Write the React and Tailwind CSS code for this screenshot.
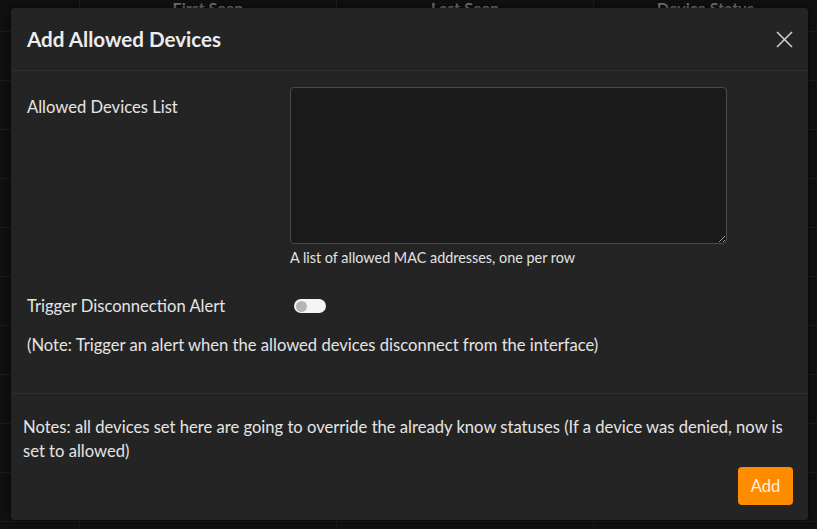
import React from "react";

function Toggle() {
  return (
    <div className="ml-[4px] flex h-[14px] w-[32px] items-center rounded-full bg-[#f5f5f5] px-[2px]">
      <div className="h-[11px] w-[11px] rounded-full bg-[#b5b5b5]" />
    </div>
  );
}

export default function App() {
  const rows = Array.from({ length: 11 });
  return (
    <div className="relative h-[529px] w-[817px] overflow-hidden bg-[#101010] font-['Lato',sans-serif] text-[#e4e4e4]">
      {/* background table */}
      <div className="absolute inset-0">
        <div className="grid h-[32px] grid-cols-[80px_257px_257px_223px] border-b border-[#1d1d1d]">
          <div className="border-r border-[#1d1d1d]" />
          <div className="flex justify-center border-r border-[#1d1d1d] text-[16px] font-bold leading-[16px] text-[#6f6f6f]">First Seen</div>
          <div className="flex justify-center border-r border-[#1d1d1d] text-[16px] font-bold leading-[16px] text-[#6f6f6f]">Last Seen</div>
          <div className="flex justify-center text-[16px] font-bold leading-[16px] text-[#6f6f6f]">Device Status</div>
        </div>
        {rows.map((_, i) => (
          <div key={i} className="grid h-[49px] grid-cols-[80px_257px_257px_223px] border-b border-[#1d1d1d]">
            <div className="border-r border-[#1a1a1a]" />
            <div className="border-r border-[#1a1a1a]" />
            <div className="border-r border-[#1a1a1a]" />
            <div />
          </div>
        ))}
      </div>

      {/* modal */}
      <div className="absolute left-[11px] top-[8px] flex h-[512px] w-[797px] flex-col rounded-[4px] bg-[#242424] shadow-[0_0_6px_rgba(0,0,0,0.6)]">
        <div className="flex h-[63px] items-center justify-between border-b border-[#2f2f2f] pl-[16px] pr-[15px]">
          <h2 className="text-[20.6px] font-bold leading-[28px] text-[#ececec]">Add Allowed Devices</h2>
          <button className="flex h-[18px] w-[18px] items-center justify-center text-[#cfcfcf]">
            <svg width="17" height="17" viewBox="0 0 17 17" fill="none" stroke="currentColor" strokeWidth="1.6">
              <line x1="1" y1="1" x2="16" y2="16" />
              <line x1="16" y1="1" x2="1" y2="16" />
            </svg>
          </button>
        </div>

        <div className="flex h-[323px] flex-col border-b border-[#2f2f2f] px-[16px] pt-[16px]">
          <div className="flex">
            <div className="w-[263px] pt-[8px] text-[16.6px] leading-[24px]">Allowed Devices List</div>
            <div className="flex flex-col">
              <textarea className="h-[157px] w-[437px] rounded-[4px] border border-[#4a4a4a] bg-[#1a1a1a] p-2 text-[14px] text-[#e2e2e2] outline-none" />
              <div className="mt-[4px] text-[14.4px] leading-[20px] text-[#e2e2e2]">A list of allowed MAC addresses, one per row</div>
            </div>
          </div>
          <div className="mt-[26px] flex items-center">
            <div className="w-[263px] text-[16.6px] leading-[24px]">Trigger Disconnection Alert</div>
            <Toggle />
          </div>
          <div className="mt-[15px] text-[16.6px] leading-[24px]">
            (Note: Trigger an alert when the allowed devices disconnect from the interface)
          </div>
        </div>

        <div className="flex flex-1 flex-col pl-[12px] pr-[15px] pt-[21px]">
          <p className="text-[16.6px] leading-[24px]">
            Notes: all devices set here are going to override the already know statuses (If a device was denied, now is set to allowed)
          </p>
          <div className="mt-[4px] flex justify-end">
            <button className="h-[38px] w-[55px] rounded-[4px] bg-[#ff8c00] text-[16.6px] text-[#fbeede]">Add</button>
          </div>
        </div>
      </div>
    </div>
  );
}
